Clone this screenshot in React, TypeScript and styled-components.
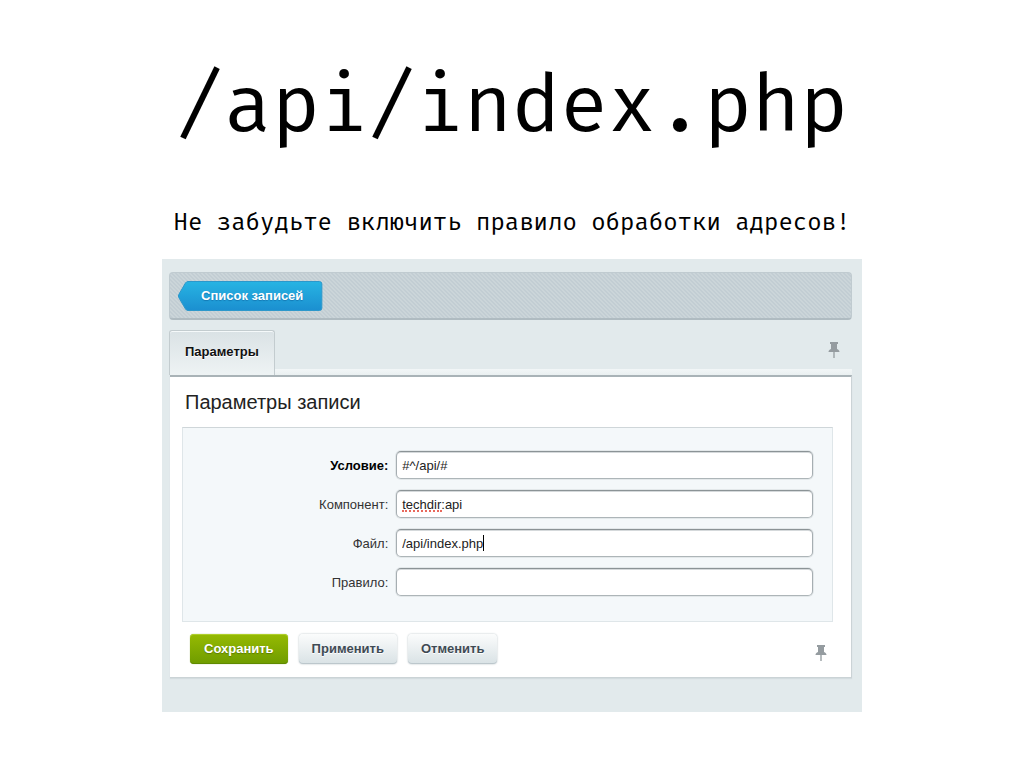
import React from 'react';
import styled, { createGlobalStyle, css } from 'styled-components';

const GlobalStyle = createGlobalStyle`
  *, *::before, *::after { box-sizing: border-box; }
  body {
    margin: 0;
    background: #fff;
    color: #000;
    font-family: "Liberation Sans", Arial, sans-serif;
    font-size: 13px;
  }
`;

const Slide = styled.main`
  display: flex;
  flex-direction: column;
  align-items: center;
  padding: 56px 24px;
`;

const Title = styled.h1`
  margin: 0;
  font: 400 80px/96px "Fira Mono", "DejaVu Sans Mono", monospace;
`;

const Note = styled.p`
  margin: 54px 0 21px;
  font: 400 24px/32px "Fira Mono", "DejaVu Sans Mono", monospace;
`;

const Panel = styled.section`
  width: 100%;
  max-width: 700px;
  padding: 13px 10px 34px 7px;
  background: #e2eaec;
`;

const Toolbar = styled.nav`
  display: flex;
  align-items: center;
  height: 48px;
  padding: 0 8px;
  border: 1px solid #c0cbd0;
  border-bottom: 2px solid #afbbc1;
  border-radius: 4px;
  background: linear-gradient(45deg, #c2cdd3 25%, #cbd5d9 25% 50%, #c2cdd3 50% 75%, #cbd5d9 75%) 0 0 / 4px 4px;
`;

const BackLink = styled.a`
  position: relative;
  padding: 0 19px 0 23px;
  height: 30px;
  color: #fff;
  font-weight: 700;
  font-size: 13px;
  line-height: 30px;
  text-decoration: none;
  text-shadow: 0 1px 1px #1479b4;
  white-space: nowrap;
`;

const ArrowShape = styled.svg`
  position: absolute;
  inset: 0;
  width: 100%;
  height: 100%;
  overflow: visible;
`;

const BackLabel = styled.span`
  position: relative;
`;

const TabBar = styled.div`
  display: flex;
  align-items: flex-start;
  justify-content: space-between;
  margin-top: 10px;
  padding: 0 12px 0 0;
  height: 45px;
  background: linear-gradient(#f2f6f7, #eaf0f1) bottom / 100% 6px no-repeat;
`;

const Tab = styled.button`
  height: 45px;
  padding: 0 15px 2px;
  border: 1px solid #c3cccf;
  border-bottom: 0;
  border-radius: 3px 3px 0 0;
  background: linear-gradient(#dae2e5, #eef3f4);
  box-shadow: inset 0 1px #f5f9fa;
  color: #111;
  font: 700 13px/16px "Liberation Sans", Arial, sans-serif;
  text-shadow: 0 1px #fff;
`;

const PinButton = styled.button<{ $low?: boolean }>`
  display: flex;
  margin-top: ${({ $low }) => ($low ? 10 : 11)}px;
  padding: 0;
  border: 0;
  background: none;
`;

const Card = styled.form`
  margin-left: 1px;
  padding: 0 18px 13px 12px;
  border-top: 2px solid #a9b3b7;
  border-right: 1px solid #cbd3d6;
  border-bottom: 1px solid #cbd3d6;
  background: #fff;
  box-shadow: 0 1px 1px #d3dcdf;
`;

const Heading = styled.h2`
  margin: 0;
  padding: 12px 3px;
  color: #222;
  font-weight: 400;
  font-size: 20px;
  line-height: 26px;
`;

const Fields = styled.div`
  display: grid;
  gap: 11px;
  padding: 23px 19px 25px 0;
  border: 1px solid #dfe6e9;
  border-top: 1px solid #cfd6d9;
  background: #f4f8fa;
`;

const Row = styled.div`
  display: grid;
  grid-template-columns: 33fr 67fr;
  column-gap: 8px;
  align-items: center;
`;

const Label = styled.label<{ $strong?: boolean }>`
  color: ${({ $strong }) => ($strong ? '#000' : '#333')};
  font-weight: ${({ $strong }) => ($strong ? 700 : 400)};
  text-align: right;
`;

const InputWrap = styled.div`
  position: relative;
  display: flex;
`;

const Input = styled.input`
  width: 100%;
  height: 28px;
  padding: 0 5px;
  border: 1px solid #a3abae;
  border-color: #8b9396 #a6aeb2 #adb5b8;
  border-radius: 5px;
  background: #fff;
  box-shadow: inset 0 1px #d5d9db, 0 0 0 1px #e3e8ea;
  color: #222;
  font: 400 13px/16px "Liberation Sans", Arial, sans-serif;
`;

const SpellMark = styled.i`
  position: absolute;
  left: 6px;
  bottom: 6px;
  width: 40px;
  border-bottom: 2px dotted #e8695c;
`;

const Caret = styled.i`
  position: absolute;
  left: 87px;
  top: 6px;
  height: 16px;
  border-left: 1px solid #000;
`;

const Actions = styled.div`
  display: flex;
  align-items: flex-start;
  gap: 11px;
  padding: 12px 6px 0 8px;
`;

const Spacer = styled.span`
  flex: 1;
`;

const Button = styled.button<{ $primary?: boolean }>`
  height: 30px;
  padding: 0 13px 1px;
  border: 0;
  border-radius: 4px;
  font: 700 13px/16px "Liberation Sans", Arial, sans-serif;
  ${({ $primary }) =>
    $primary
      ? css`
          padding: 0 14px 1px;
          color: #fff;
          background: linear-gradient(#96ba02, #6f9c00);
          box-shadow: inset 0 1px #afcf2b, inset 0 -1px #5f8a00, 0 0 1px #87a53a;
          text-shadow: 0 1px 1px #5b7d00;
        `
      : css`
          color: #3f4b54;
          background: linear-gradient(#fbfcfc, #d9e2e5);
          box-shadow: inset 0 -1px #bcc7cc, 0 0 2px #aebabf;
          text-shadow: 0 1px #fff;
        `}
`;

function Pin({ low = false }: { low?: boolean }) {
  return (
    <PinButton type="button" $low={low} aria-label="Закрепить">
      <svg width="12" height="18" viewBox="0 0 12 18" fill="#959ca0" aria-hidden="true">
        <path d="M2 1h8v2H9v5c1.500.5 2.500 1.500 2.500 3h-11c0-1.500 1-2.500 2.500-3V3H2z" />
        <path d="M5.200 11h1.600v6H5.200z" fill="#a4abae" />
      </svg>
    </PinButton>
  );
}

const fields = [
  { id: 'condition', label: 'Условие:', value: '#^/api/#', strong: true },
  { id: 'component', label: 'Компонент:', value: 'techdir:api', mark: <SpellMark /> },
  { id: 'file', label: 'Файл:', value: '/api/index.php', mark: <Caret /> },
  { id: 'rule', label: 'Правило:', value: '' },
];

export default function App() {
  return (
    <>
      <GlobalStyle />
      <Slide>
        <Title>/api/index.php</Title>
        <Note>Не забудьте включить правило обработки адресов!</Note>
        <Panel>
          <Toolbar>
            <BackLink href="#list">
              <ArrowShape viewBox="0 0 145 30" preserveAspectRatio="none" aria-hidden="true">
                <defs>
                  <linearGradient id="back" x1="0" y1="0" x2="0" y2="1">
                    <stop offset="0" stopColor="#27b4e3" />
                    <stop offset="1" stopColor="#1b8fd0" />
                  </linearGradient>
                </defs>
                <path
                  d="M10 .5H142q2.500 0 2.500 2.500V27q0 2.500-2.500 2.500H10q-1.500 0-2.500-1.500L.8 16.500q-.8-1.500 0-3L7.500 2Q8.500.5 10 .5z"
                  fill="url(#back)"
                  stroke="#2c98cb"
                />
              </ArrowShape>
              <BackLabel>Список записей</BackLabel>
            </BackLink>
          </Toolbar>
          <TabBar>
            <Tab type="button">Параметры</Tab>
            <Pin />
          </TabBar>
          <Card>
            <Heading>Параметры записи</Heading>
            <Fields>
              {fields.map((f) => (
                <Row key={f.id}>
                  <Label htmlFor={f.id} $strong={f.strong}>
                    {f.label}
                  </Label>
                  <InputWrap>
                    <Input id={f.id} type="text" defaultValue={f.value} />
                    {f.mark}
                  </InputWrap>
                </Row>
              ))}
            </Fields>
            <Actions>
              <Button type="button" $primary>
                Сохранить
              </Button>
              <Button type="button">Применить</Button>
              <Button type="button">Отменить</Button>
              <Spacer />
              <Pin low />
            </Actions>
          </Card>
        </Panel>
      </Slide>
    </>
  );
}
